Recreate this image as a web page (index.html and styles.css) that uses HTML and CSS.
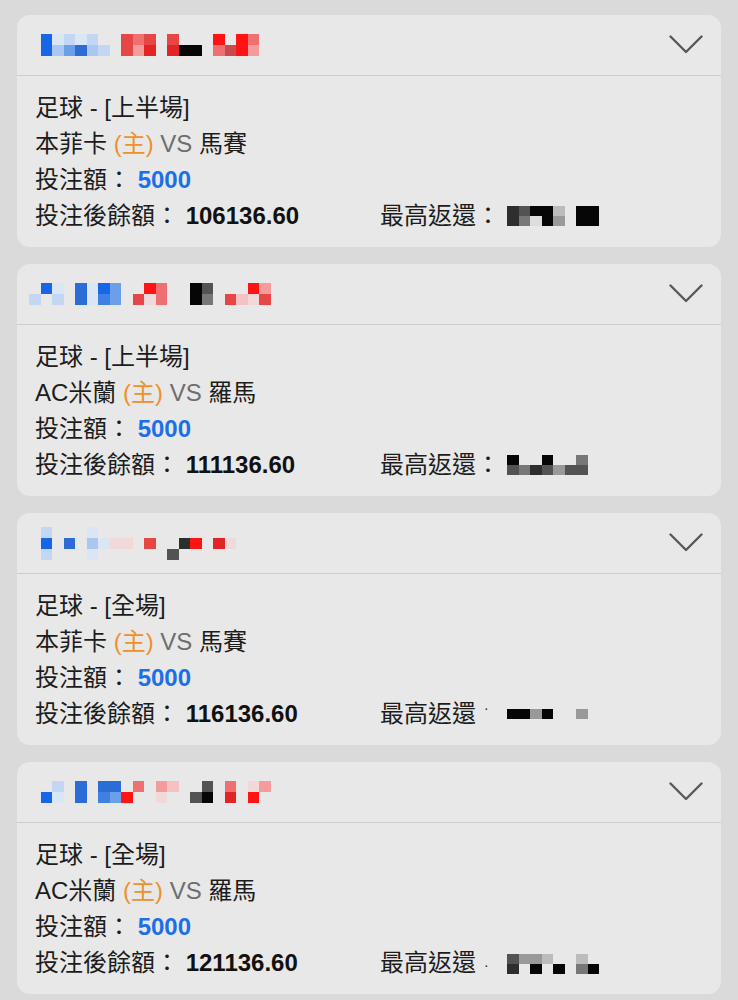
FILE: index.html
```html
<!DOCTYPE html>
<html lang="zh-Hant">
<head>
<meta charset="utf-8">
<title>投注記錄</title>
<link rel="stylesheet" href="styles.css">
</head>
<body>
<main class="list">

  <section class="card">
    <header class="head">
      <div class="pix">
        <i class="c"><b></b><b></b></i>
        <i class="c"><b class="B"></b><b class="B"></b></i>
        <i class="c"><b class="B7"></b><b class="B5"></b></i>
        <i class="c"><b class="B6"></b><b class="B4"></b></i>
        <i class="c"><b class="B7"></b><b class="B2"></b></i>
        <i class="c"><b class="B6"></b><b class="B5"></b></i>
        <i class="c"><b></b><b class="B6"></b></i>
        <i class="c"><b></b><b></b></i>
        <i class="c"><b class="R3"></b><b class="R3"></b></i>
        <i class="c"><b class="R4"></b><b class="R5"></b></i>
        <i class="c"><b class="R3"></b><b class="R2"></b></i>
        <i class="c"><b></b><b></b></i>
        <i class="c"><b class="R3"></b><b class="R2"></b></i>
        <i class="c"><b></b><b class="K"></b></i>
        <i class="c"><b></b><b class="K"></b></i>
        <i class="c"><b></b><b></b></i>
        <i class="c"><b class="R"></b><b class="R4"></b></i>
        <i class="c"><b></b><b class="R8"></b></i>
        <i class="c"><b class="R"></b><b class="R"></b></i>
        <i class="c"><b class="R4"></b><b class="R5"></b></i>
      </div>
      <svg class="chev" viewBox="0 0 34 19" width="34" height="19"><polyline points="1.5,1.5 17,17 32.5,1.5"/></svg>
    </header>
    <div class="body">
      <p>足球 - [上半場]</p>
      <p>本菲卡 <span class="home">(主)</span> <span class="vs">VS</span> 馬賽</p>
      <p>投注額： <strong class="amt">5000</strong></p>
      <div class="row">
        <p>投注後餘額： <strong>106136.60</strong></p>
        <p class="ret"><span class="lbl">最高返還：</span>
          <span class="pix sm">
            <i class="c"><b class="K2"></b><b class="K2"></b></i>
            <i class="c"><b class="K3"></b><b class="K4"></b></i>
            <i class="c"><b class="K"></b><b class="K7"></b></i>
            <i class="c"><b class="K"></b><b class="K"></b></i>
            <i class="c"><b class="K6"></b><b class="K5"></b></i>
            <i class="c"><b></b><b></b></i>
            <i class="c"><b class="K"></b><b class="K"></b></i>
            <i class="c"><b class="K"></b><b class="K"></b></i>
          </span>
        </p>
      </div>
    </div>
  </section>

  <section class="card">
    <header class="head">
      <div class="pix">
        <i class="c"><b></b><b class="B6"></b></i>
        <i class="c"><b class="B"></b><b></b></i>
        <i class="c"><b class="B7"></b><b class="B6"></b></i>
        <i class="c"><b></b><b></b></i>
        <i class="c"><b class="B2"></b><b class="B2"></b></i>
        <i class="c"><b class="B7"></b><b class="B7"></b></i>
        <i class="c"><b class="B"></b><b class="B3"></b></i>
        <i class="c"><b class="B4"></b><b class="B4"></b></i>
        <i class="c"><b></b><b></b></i>
        <i class="c"><b></b><b class="R3"></b></i>
        <i class="c"><b class="R"></b><b class="R7"></b></i>
        <i class="c"><b class="R4"></b><b class="R4"></b></i>
        <i class="c"><b></b><b></b></i>
        <i class="c"><b></b><b></b></i>
        <i class="c"><b class="K"></b><b class="K"></b></i>
        <i class="c"><b class="K3"></b><b class="K4"></b></i>
        <i class="c"><b></b><b></b></i>
        <i class="c"><b></b><b class="R3"></b></i>
        <i class="c"><b></b><b class="R6"></b></i>
        <i class="c"><b class="R"></b><b class="R7"></b></i>
        <i class="c"><b class="R5"></b><b class="R3"></b></i>
      </div>
      <svg class="chev" viewBox="0 0 34 19" width="34" height="19"><polyline points="1.5,1.5 17,17 32.5,1.5"/></svg>
    </header>
    <div class="body">
      <p>足球 - [上半場]</p>
      <p>AC米蘭 <span class="home">(主)</span> <span class="vs">VS</span> 羅馬</p>
      <p>投注額： <strong class="amt">5000</strong></p>
      <div class="row">
        <p>投注後餘額： <strong>111136.60</strong></p>
        <p class="ret"><span class="lbl">最高返還：</span>
          <span class="pix sm">
            <i class="c"><b class="K"></b><b class="K3"></b></i>
            <i class="c"><b></b><b class="K4"></b></i>
            <i class="c"><b></b><b class="K2"></b></i>
            <i class="c"><b class="K"></b><b class="K3"></b></i>
            <i class="c"><b></b><b class="K5"></b></i>
            <i class="c"><b></b><b class="K3"></b></i>
            <i class="c"><b class="K4"></b><b class="K3"></b></i>
          </span>
        </p>
      </div>
    </div>
  </section>

  <section class="card">
    <header class="head">
      <div class="pix">
        <i class="c"><b></b><b></b><b></b></i>
        <i class="c"><b class="B6"></b><b class="B"></b><b class="B6"></b></i>
        <i class="c"><b></b><b></b><b></b></i>
        <i class="c"><b></b><b class="B2"></b><b></b></i>
        <i class="c"><b></b><b></b><b></b></i>
        <i class="c"><b class="B7"></b><b class="B5"></b><b class="B7"></b></i>
        <i class="c"><b></b><b class="B7"></b><b></b></i>
        <i class="c"><b></b><b class="R7"></b><b></b></i>
        <i class="c"><b></b><b class="R7"></b><b></b></i>
        <i class="c"><b></b><b></b><b></b></i>
        <i class="c"><b></b><b class="R3"></b><b></b></i>
        <i class="c"><b></b><b></b><b></b></i>
        <i class="c"><b></b><b></b><b class="K3"></b></i>
        <i class="c"><b></b><b class="K2"></b><b></b></i>
        <i class="c"><b></b><b class="R"></b><b></b></i>
        <i class="c"><b></b><b></b><b></b></i>
        <i class="c"><b></b><b class="R2"></b><b></b></i>
        <i class="c"><b></b><b class="R7"></b><b></b></i>
      </div>
      <svg class="chev" viewBox="0 0 34 19" width="34" height="19"><polyline points="1.5,1.5 17,17 32.5,1.5"/></svg>
    </header>
    <div class="body">
      <p>足球 - [全場]</p>
      <p>本菲卡 <span class="home">(主)</span> <span class="vs">VS</span> 馬賽</p>
      <p>投注額： <strong class="amt">5000</strong></p>
      <div class="row">
        <p>投注後餘額： <strong>116136.60</strong></p>
        <p class="ret"><span class="lbl">最高返還<span class="dot top">·</span></span>
          <span class="pix sm">
            <i class="c"><b class="K"></b></i>
            <i class="c"><b class="K"></b></i>
            <i class="c"><b class="K5"></b></i>
            <i class="c"><b class="K"></b></i>
            <i class="c"><b></b></i>
            <i class="c"><b></b></i>
            <i class="c"><b class="K5"></b></i>
          </span>
        </p>
      </div>
    </div>
  </section>

  <section class="card">
    <header class="head">
      <div class="pix">
        <i class="c"><b></b><b></b></i>
        <i class="c"><b></b><b class="B"></b></i>
        <i class="c"><b class="B6"></b><b class="B7"></b></i>
        <i class="c"><b></b><b></b></i>
        <i class="c"><b class="B2"></b><b class="B2"></b></i>
        <i class="c"><b></b><b></b></i>
        <i class="c"><b class="B2"></b><b class="B3"></b></i>
        <i class="c"><b class="B2"></b><b class="B4"></b></i>
        <i class="c"><b></b><b class="R"></b></i>
        <i class="c"><b class="R4"></b><b></b></i>
        <i class="c"><b></b><b></b></i>
        <i class="c"><b class="R5"></b><b class="R7"></b></i>
        <i class="c"><b class="R6"></b><b></b></i>
        <i class="c"><b></b><b></b></i>
        <i class="c"><b></b><b class="K3"></b></i>
        <i class="c"><b class="K3"></b><b class="K"></b></i>
        <i class="c"><b></b><b></b></i>
        <i class="c"><b class="R4"></b><b class="R2"></b></i>
        <i class="c"><b></b><b></b></i>
        <i class="c"><b class="R7"></b><b class="R"></b></i>
        <i class="c"><b class="R5"></b><b></b></i>
      </div>
      <svg class="chev" viewBox="0 0 34 19" width="34" height="19"><polyline points="1.5,1.5 17,17 32.5,1.5"/></svg>
    </header>
    <div class="body">
      <p>足球 - [全場]</p>
      <p>AC米蘭 <span class="home">(主)</span> <span class="vs">VS</span> 羅馬</p>
      <p>投注額： <strong class="amt">5000</strong></p>
      <div class="row">
        <p>投注後餘額： <strong>121136.60</strong></p>
        <p class="ret"><span class="lbl">最高返還<span class="dot">·</span></span>
          <span class="pix sm">
            <i class="c"><b class="K3"></b><b class="K2"></b></i>
            <i class="c"><b class="K5"></b><b></b></i>
            <i class="c"><b class="K5"></b><b class="K"></b></i>
            <i class="c"><b class="K6"></b><b></b></i>
            <i class="c"><b></b><b class="K"></b></i>
            <i class="c"><b></b><b></b></i>
            <i class="c"><b class="K6"></b><b class="K4"></b></i>
            <i class="c"><b></b><b class="K"></b></i>
          </span>
        </p>
      </div>
    </div>
  </section>

</main>
</body>
</html>
```

FILE: styles.css
```css
* { box-sizing: border-box; }

html, body {
  margin: 0;
  background: #dadada;
}

body {
  padding: 15px 17px 0;
  font-family: "Liberation Sans", "Noto Sans CJK TC", sans-serif;
  color: #1c1c1c;
}

.list {
  display: flex;
  flex-direction: column;
  gap: 17px;
  width: 704px;
}

.card {
  background: #e8e8e8;
  border-radius: 13px;
  height: 232px;
  overflow: hidden;
}

.head {
  height: 61px;
  border-bottom: 1px solid #cdcdcd;
  display: flex;
  align-items: center;
  justify-content: space-between;
  padding: 0 18px 0 12px;
}

.pix {
  display: flex;
  align-items: center;
}

.c {
  display: flex;
  flex-direction: column;
  width: 11.5px;
}

.c b {
  display: block;
  height: 11px;
  background: transparent;
}

.pix.sm .c b { height: 10px; }

.B  { background: #1766e8 !important; }
.B2 { background: #2b6cd6 !important; }
.B3 { background: #3f80e2 !important; }
.B4 { background: #6c9fe9 !important; }
.B5 { background: #a9c7f0 !important; }
.B6 { background: #c3d7f4 !important; }
.B7 { background: #dbe6f5 !important; }
.R  { background: #ff1313 !important; }
.R2 { background: #e22424 !important; }
.R3 { background: #e64646 !important; }
.R4 { background: #ef7070 !important; }
.R5 { background: #f59b9b !important; }
.R6 { background: #f4c2c2 !important; }
.R7 { background: #f1d9d9 !important; }
.R8 { background: #c84a4a !important; }
.K  { background: #060606 !important; }
.K2 { background: #2e2e2e !important; }
.K3 { background: #535353 !important; }
.K4 { background: #777777 !important; }
.K5 { background: #999999 !important; }
.K6 { background: #bcbcbc !important; }
.K7 { background: #dddddd !important; }

.chev {
  display: block;
  fill: none;
  stroke: #585858;
  stroke-width: 2.4;
  stroke-linecap: round;
  stroke-linejoin: round;
  margin-top: -1px;
}

.body {
  padding: 14px 18px 13px;
  font-size: 24px;
  line-height: 36px;
}

.body p {
  margin: 0;
  white-space: nowrap;
}

.home { color: #f0902c; }
.vs { color: #6e6e6e; }

strong { font-weight: 700; color: #111; }
.amt { color: #1c6fe6; }

.row {
  display: grid;
  grid-template-columns: 345px auto;
}

.ret {
  display: flex;
  align-items: center;
}

.lbl {
  display: inline-block;
  width: 127px;
  position: relative;
}

.dot {
  display: inline-block;
  margin-left: 8px;
  font-size: 14px;
  vertical-align: middle;
}

.dot.top { vertical-align: top; line-height: 24px; }
```
